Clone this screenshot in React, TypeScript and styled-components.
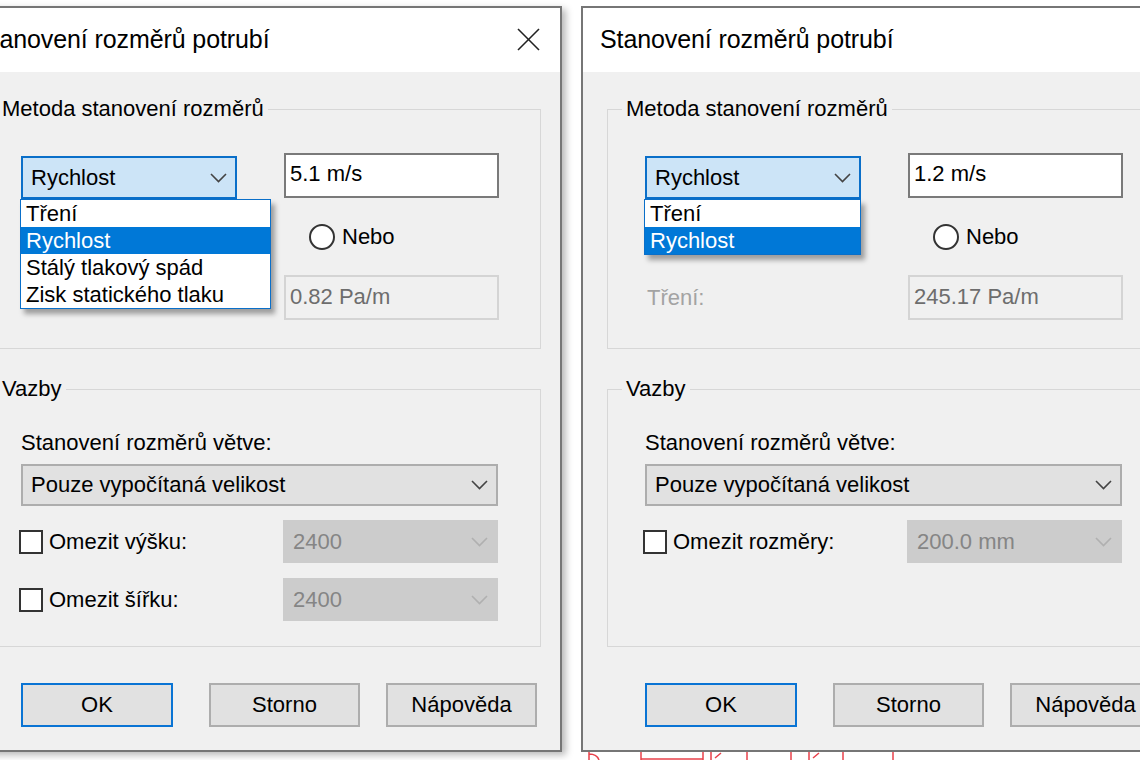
import React from "react";
import styled, { createGlobalStyle } from "styled-components";

const GlobalStyle = createGlobalStyle`
  html, body { margin: 0; padding: 0; background: #ffffff; overflow: hidden; }
  body { font-family: "Liberation Sans", Arial, sans-serif; color: #000; }
`;

const Stage = styled.div`
  width: 1140px;
  height: 760px;
  overflow: hidden;
  display: flex;
  align-items: flex-start;
  gap: 19px;
  padding-top: 6px;
  box-sizing: border-box;
  background: #ffffff;
`;

const Column = styled.div<{ $shift?: number }>`
  flex: none;
  display: flex;
  flex-direction: column;
  margin-left: ${(p) => p.$shift ?? 0}px;
`;

const Window = styled.div<{ $shadow?: boolean }>`
  width: 605px;
  height: 746px;
  box-sizing: border-box;
  border: 2px solid #767676;
  display: flex;
  flex-direction: column;
  background: #f0f0f0;
  box-shadow: ${(p) => (p.$shadow ? "4px 3px 7px rgba(0,0,0,0.28)" : "none")};
`;

const TitleBar = styled.div`
  height: 62px;
  flex: none;
  background: #ffffff;
  display: flex;
  align-items: center;
  justify-content: space-between;
  padding: 0 20px 2px 17px;
`;

const Title = styled.span`
  font-size: 25px;
  letter-spacing: -0.1px;
  color: #000;
`;

const CloseIcon = styled.svg`
  width: 23px;
  height: 23px;
  flex: none;
`;

const Body = styled.div`
  flex: 1;
  display: flex;
  flex-direction: column;
  background: #f0f0f0;
`;

const GroupBox = styled.div<{ $top: number; $height: number }>`
  margin: ${(p) => p.$top}px 19px 0 24px;
  height: ${(p) => p.$height}px;
  box-sizing: border-box;
  border: 1px solid #d7d7d7;
  display: flex;
  flex-direction: column;
  align-items: flex-start;
`;

const Legend = styled.div`
  margin: -14px 0 0 14px;
  padding: 0 4px;
  background: #f0f0f0;
  font-size: 22px;
  line-height: 26px;
  height: 26px;
`;

const MethodGrid = styled.div`
  margin: 31px 0 0 37px;
  display: grid;
  grid-template-columns: 216px 215px;
  grid-template-rows: 46px 76px 45px;
  column-gap: 47px;
`;

const ComboWrap = styled.div`
  position: relative;
  margin-top: 3px;
`;

const Combo = styled.div<{ $variant: "focus" | "normal" | "disabled"; $height: number }>`
  height: ${(p) => p.$height}px;
  box-sizing: border-box;
  display: flex;
  align-items: center;
  justify-content: space-between;
  padding: 0 8px 0 8px;
  font-size: 22px;
  border: 2px solid
    ${(p) => (p.$variant === "focus" ? "#0a6fc9" : p.$variant === "normal" ? "#adadad" : "#cccccc")};
  background: ${(p) => (p.$variant === "focus" ? "#cce4f7" : p.$variant === "normal" ? "#e1e1e1" : "#cccccc")};
  color: ${(p) => (p.$variant === "disabled" ? "#858585" : "#000")};
`;

const Chevron = styled.svg`
  width: 17px;
  height: 10px;
  flex: none;
`;

const DropList = styled.div`
  position: absolute;
  top: 100%;
  left: -1px;
  z-index: 5;
  box-sizing: border-box;
  border: 1px solid #0a6fc9;
  background: #fff;
  box-shadow: 4px 5px 5px rgba(0, 0, 0, 0.35);
`;

const DropItem = styled.div<{ $selected?: boolean }>`
  height: 27px;
  line-height: 27px;
  padding-left: 5px;
  font-size: 22px;
  white-space: nowrap;
  background: ${(p) => (p.$selected ? "#0078d7" : "#fff")};
  color: ${(p) => (p.$selected ? "#fff" : "#000")};
`;

const TextBox = styled.div<{ $disabled?: boolean }>`
  height: 45px;
  box-sizing: border-box;
  border: 2px solid ${(p) => (p.$disabled ? "#d4d4d4" : "#7a7a7a")};
  background: ${(p) => (p.$disabled ? "#f0f0f0" : "#fff")};
  color: ${(p) => (p.$disabled ? "#6d6d6d" : "#000")};
  font-size: 22px;
  padding: ${(p) => (p.$disabled ? "7px 0 0 4px" : "6px 0 0 4px")};
`;

const RadioRow = styled.label`
  display: flex;
  align-items: center;
  gap: 7px;
  padding-left: 25px;
  font-size: 22px;
`;

const RadioCircle = styled.span`
  width: 26px;
  height: 26px;
  box-sizing: border-box;
  border-radius: 50%;
  border: 2px solid #333;
  background: #fff;
  flex: none;
`;

const FieldLabel = styled.span<{ $disabled?: boolean }>`
  font-size: 22px;
  align-self: center;
  padding-left: 2px;
  color: ${(p) => (p.$disabled ? "#a3a3a3" : "#000")};
`;

const Caption = styled.div`
  margin: 28px 0 0 37px;
  font-size: 22px;
  line-height: 26px;
`;

const WideCombo = styled.div`
  margin: 8px 0 0 37px;
  width: 477px;
`;

const ConstraintGrid = styled.div`
  margin: 14px 0 0 35px;
  display: grid;
  grid-template-columns: 264px 215px;
  grid-auto-rows: 43px;
  row-gap: 15px;
`;

const CheckRow = styled.label`
  display: flex;
  align-items: center;
  gap: 6px;
  font-size: 22px;
`;

const CheckBox = styled.span`
  width: 24px;
  height: 24px;
  box-sizing: border-box;
  border: 2px solid #333;
  background: #fff;
  flex: none;
`;

const ButtonRow = styled.div`
  margin: 36px 0 0 62px;
  display: flex;
  gap: 26px;
`;

const Button = styled.button<{ $primary?: boolean }>`
  width: ${(p) => (p.$primary ? 152 : 151)}px;
  height: 44px;
  margin-right: ${(p) => (p.$primary ? 10 : 0)}px;
  box-sizing: border-box;
  border: 2px solid ${(p) => (p.$primary ? "#0a74d4" : "#adadad")};
  background: #e1e1e1;
  font-family: "Liberation Sans", Arial, sans-serif;
  font-size: 22px;
  color: #000;
  padding: 0;
`;

const CadStrip = styled.svg`
  width: 605px;
  height: 8px;
  display: block;
`;

const ChevronIcon = ({ color }: { color: string }) => (
  <Chevron viewBox="0 0 17 10">
    <polyline points="1,1 8.5,8.5 16,1" fill="none" stroke={color} strokeWidth="1.6" />
  </Chevron>
);

type DialogProps = {
  velocity: string;
  friction: string;
  items: string[];
  listWidth: number;
  constraints: { label: string; value: string }[];
  shadow?: boolean;
};

const Dialog = ({ velocity, friction, items, listWidth, constraints, shadow }: DialogProps) => (
  <Window $shadow={shadow}>
    <TitleBar>
      <Title>Stanovení rozměrů potrubí</Title>
      <CloseIcon viewBox="0 0 23 23">
        <line x1="1" y1="1" x2="22" y2="22" stroke="#222" strokeWidth="1.6" />
        <line x1="22" y1="1" x2="1" y2="22" stroke="#222" strokeWidth="1.6" />
      </CloseIcon>
    </TitleBar>
    <Body>
      <GroupBox $top={37} $height={240}>
        <Legend>Metoda stanovení rozměrů</Legend>
        <MethodGrid>
          <ComboWrap>
            <Combo $variant="focus" $height={43}>
              <span>Rychlost</span>
              <ChevronIcon color="#444" />
            </Combo>
            <DropList style={{ width: listWidth }}>
              {items.map((it, i) => (
                <DropItem key={it} $selected={i === 1}>
                  {it}
                </DropItem>
              ))}
            </DropList>
          </ComboWrap>
          <TextBox>{velocity}</TextBox>
          <span />
          <RadioRow>
            <RadioCircle />
            Nebo
          </RadioRow>
          <FieldLabel $disabled>Tření:</FieldLabel>
          <TextBox $disabled>{friction}</TextBox>
        </MethodGrid>
      </GroupBox>
      <GroupBox $top={40} $height={258}>
        <Legend>Vazby</Legend>
        <Caption>Stanovení rozměrů větve:</Caption>
        <WideCombo>
          <Combo $variant="normal" $height={42}>
            <span>Pouze vypočítaná velikost</span>
            <ChevronIcon color="#444" />
          </Combo>
        </WideCombo>
        <ConstraintGrid>
          {constraints.map((c) => (
            <React.Fragment key={c.label}>
              <CheckRow>
                <CheckBox />
                {c.label}
              </CheckRow>
              <Combo $variant="disabled" $height={43}>
                <span>{c.value}</span>
                <ChevronIcon color="#b0b0b0" />
              </Combo>
            </React.Fragment>
          ))}
        </ConstraintGrid>
      </GroupBox>
      <ButtonRow>
        <Button $primary>OK</Button>
        <Button>Storno</Button>
        <Button>Nápověda</Button>
      </ButtonRow>
    </Body>
  </Window>
);

export default function App() {
  return (
    <>
      <GlobalStyle />
      <Stage>
        <Column $shift={-43}>
          <Dialog
            shadow
            velocity="5.1 m/s"
            friction="0.82 Pa/m"
            items={["Tření", "Rychlost", "Stálý tlakový spád", "Zisk statického tlaku"]}
            listWidth={251}
            constraints={[
              { label: "Omezit výšku:", value: "2400" },
              { label: "Omezit šířku:", value: "2400" },
            ]}
          />
        </Column>
        <Column>
          <Dialog
            velocity="1.2 m/s"
            friction="245.17 Pa/m"
            items={["Tření", "Rychlost"]}
            listWidth={217}
            constraints={[{ label: "Omezit rozměry:", value: "200.0 mm" }]}
          />
          <CadStrip viewBox="0 0 605 8">
            <g fill="none" stroke="#e8404a" strokeWidth="1.5">
              <path d="M8 0 L8 8 M8 2 Q16 2 18 8" />
              <line x1="60" y1="0" x2="60" y2="8" />
              <line x1="122" y1="0" x2="122" y2="8" />
              <line x1="60" y1="7" x2="122" y2="7" />
              <path d="M130 0 L130 8 M134 6 L140 1" />
              <line x1="166" y1="0" x2="166" y2="8" />
              <line x1="210" y1="0" x2="210" y2="8" />
              <path d="M228 0 L228 8 M232 6 L238 1" />
              <line x1="262" y1="0" x2="262" y2="8" />
              <line x1="312" y1="0" x2="312" y2="8" />
            </g>
          </CadStrip>
        </Column>
      </Stage>
    </>
  );
}
